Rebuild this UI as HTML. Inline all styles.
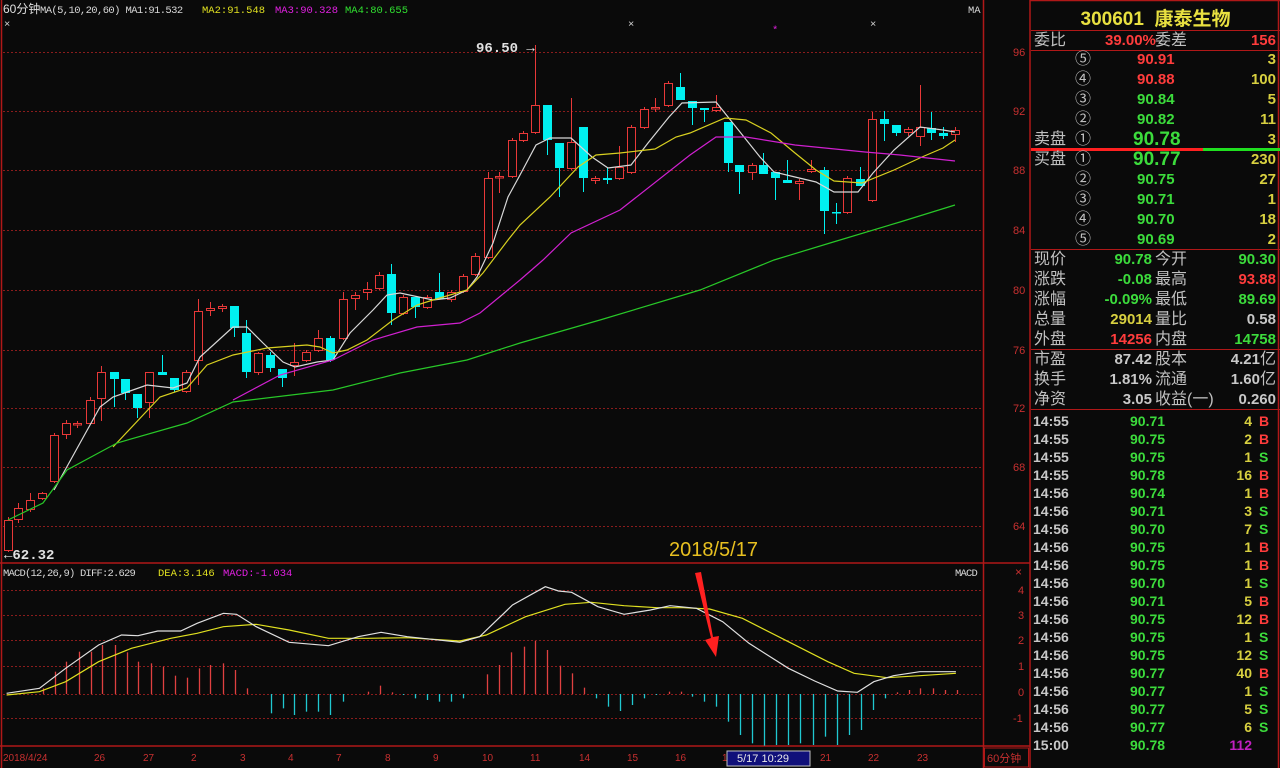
<!DOCTYPE html>
<html><head><meta charset="utf-8">
<style>
body{margin:0;background:#0a0a0a;width:1280px;height:768px;overflow:hidden;font-family:"Liberation Sans","Noto Sans CJK SC",sans-serif;}
#c{position:absolute;left:0;top:0}
.rp{position:absolute;left:1031px;top:0;width:249px;height:768px;color:#c0c0c0;font-weight:bold;}
.row{position:absolute;left:0;width:249px;height:20px;font-size:15px;line-height:20px;}
.row span{position:absolute;white-space:nowrap}
.g{color:#3cdc3c}.r{color:#ff3c3c}.y{color:#d8d040}.w{color:#c8c8c8}.m{color:#d020d0}
.cn{font-weight:normal;font-size:16px;color:#c0c0c0}
.hl{position:absolute;left:0;width:249px;height:1px;background:#b01818}
</style></head><body>
<svg id="c" width="1280" height="768" xmlns="http://www.w3.org/2000/svg">
<rect x="0" y="0" width="1280" height="768" fill="#0a0a0a"/>
<g id="grid" stroke="#8a1c1c" stroke-dasharray="2,2" stroke-width="1"></g>
<g fill="none" stroke="#b01818" stroke-width="1.5">
<line x1="1.5" y1="0" x2="1.5" y2="768"/>
<line x1="0" y1="563" x2="1030" y2="563"/>
<line x1="0" y1="746" x2="1030" y2="746"/>
<line x1="983.5" y1="0" x2="983.5" y2="768"/>
<line x1="1030" y1="0" x2="1030" y2="768"/>
<line x1="1030" y1="0.5" x2="1280" y2="0.5"/>
<line x1="1278.5" y1="0" x2="1278.5" y2="768"/>
</g>
<g id="cand"></g>
<g id="ma" fill="none" stroke-width="1.2"></g>
<g id="bars" stroke-width="1.3"></g>
<g id="macd" fill="none" stroke-width="1.2"></g>
<g font-family="Liberation Sans,sans-serif" font-size="11" fill="#c83030">
<text x="1013" y="56">96</text><text x="1013" y="115">92</text><text x="1013" y="174">88</text><text x="1013" y="234">84</text><text x="1013" y="294">80</text><text x="1013" y="354">76</text><text x="1013" y="412">72</text><text x="1013" y="471">68</text><text x="1013" y="530">64</text>
<text x="1018" y="594">4</text><text x="1018" y="619">3</text><text x="1018" y="644">2</text><text x="1018" y="670">1</text><text x="1018" y="696">0</text><text x="1013" y="722">-1</text>
</g>
<text x="1015" y="576" font-size="12" fill="#c83030" font-family="Liberation Sans,sans-serif">×</text>
<g font-family="Liberation Mono,monospace" font-size="10.5">
<text x="3" y="13" fill="#e0e0e0" font-family="Liberation Sans,Noto Sans CJK SC,sans-serif" font-size="12">60分钟</text>
<text x="40" y="13" fill="#d8d8d8" letter-spacing="-0.6">MA(5,10,20,60) MA1:91.532</text>
<text x="202" y="13" fill="#e0e020">MA2:91.548</text>
<text x="275" y="13" fill="#e020e0">MA3:90.328</text>
<text x="345" y="13" fill="#30e030">MA4:80.655</text>
<text x="968" y="13" fill="#d8d8d8">MA</text>
<text x="4" y="27" fill="#d8d8d8">×</text>
<text x="628" y="27" fill="#d8d8d8">×</text>
<text x="870" y="27" fill="#d8d8d8">×</text>
<text x="772" y="33" fill="#e020e0">*</text>
<text x="3" y="576" fill="#d8d8d8" letter-spacing="-0.8">MACD(12,26,9) DIFF:2.629</text>
<text x="158" y="576" fill="#e0e020">DEA:3.146</text>
<text x="223" y="576" fill="#e020e0">MACD:-1.034</text>
<text x="955" y="576" fill="#d8d8d8" letter-spacing="-0.8">MACD</text>
</g>
<text x="476" y="52" font-family="Liberation Mono,monospace" font-weight="bold" font-size="14" fill="#e0e0e0">96.50 →</text>
<text x="4" y="559" font-family="Liberation Mono,monospace" font-weight="bold" font-size="14" fill="#e0e0e0">←62.32</text>
<text x="669" y="556" font-family="Liberation Sans,sans-serif" font-size="20" fill="#e8c020">2018/5/17</text>
<polygon points="695,573 701,572 713,637 719,636 716,657 705,640 711,638" fill="#ff2020"/>
<g font-family="Liberation Sans,sans-serif" font-size="10" fill="#c83030">
<text x="3" y="761">2018/4/24</text><text x="94" y="761">26</text><text x="143" y="761">27</text><text x="191" y="761">2</text><text x="240" y="761">3</text><text x="288" y="761">4</text><text x="336" y="761">7</text><text x="385" y="761">8</text><text x="433" y="761">9</text><text x="482" y="761">10</text><text x="530" y="761">11</text><text x="579" y="761">14</text><text x="627" y="761">15</text><text x="675" y="761">16</text><text x="722" y="761">1</text><text x="820" y="761">21</text><text x="868" y="761">22</text><text x="917" y="761">23</text>
</g>
<rect x="727" y="751" width="83" height="15" fill="#10107a" stroke="#c0c0c0" stroke-width="1"/>
<text x="737" y="762" font-family="Liberation Sans,sans-serif" font-size="11" fill="#e8e8e8">5/17 10:29</text>
<rect x="984.5" y="748" width="44" height="19" fill="none" stroke="#b01818"/>
<text x="987" y="762" font-family="Liberation Sans,Noto Sans CJK SC,sans-serif" font-size="11" fill="#c83030">60分钟</text>
</svg>

<div class="rp">
<div style="position:absolute;left:0;top:4px;width:249px;text-align:center;font-size:19px;color:#e8e040;font-family:'Liberation Sans','Noto Sans CJK SC',sans-serif;">300601&nbsp; 康泰生物</div>
<div class="hl" style="top:30px"></div>
<div class="row" style="top:31px"><span class="cn" style="left:3px">委比</span><span class="r" style="left:74px">39.00%</span><span class="cn" style="left:124px">委差</span><span class="r" style="right:4px">156</span></div>
<div class="hl" style="top:50px"></div>
<div class="row" style="top:50px"><span class="cn" style="left:44px">⑤</span><span class="r" style="left:106px">90.91</span><span class="y" style="right:4px">3</span></div>
<div class="row" style="top:70px"><span class="cn" style="left:44px">④</span><span class="r" style="left:106px">90.88</span><span class="y" style="right:4px">100</span></div>
<div class="row" style="top:90px"><span class="cn" style="left:44px">③</span><span class="g" style="left:106px">90.84</span><span class="y" style="right:4px">5</span></div>
<div class="row" style="top:110px"><span class="cn" style="left:44px">②</span><span class="g" style="left:106px">90.82</span><span class="y" style="right:4px">11</span></div>
<div class="row" style="top:130px"><span class="cn" style="left:3px">卖盘</span><span class="cn" style="left:44px">①</span><span class="g" style="left:102px;font-size:19px">90.78</span><span class="y" style="right:4px">3</span></div>
<div style="position:absolute;top:148px;left:0;width:172px;height:3px;background:#ff2020"></div>
<div style="position:absolute;top:148px;left:172px;width:77px;height:3px;background:#20e020"></div>
<div class="row" style="top:150px"><span class="cn" style="left:3px">买盘</span><span class="cn" style="left:44px">①</span><span class="g" style="left:102px;font-size:19px">90.77</span><span class="y" style="right:4px">230</span></div>
<div class="row" style="top:170px"><span class="cn" style="left:44px">②</span><span class="g" style="left:106px">90.75</span><span class="y" style="right:4px">27</span></div>
<div class="row" style="top:190px"><span class="cn" style="left:44px">③</span><span class="g" style="left:106px">90.71</span><span class="y" style="right:4px">1</span></div>
<div class="row" style="top:210px"><span class="cn" style="left:44px">④</span><span class="g" style="left:106px">90.70</span><span class="y" style="right:4px">18</span></div>
<div class="row" style="top:230px"><span class="cn" style="left:44px">⑤</span><span class="g" style="left:106px">90.69</span><span class="y" style="right:4px">2</span></div>
<div class="hl" style="top:249px"></div>
<div class="row" style="top:250px"><span class="cn" style="left:3px">现价</span><span class="g" style="right:128px">90.78</span><span class="cn" style="left:124px">今开</span><span class="g" style="right:4px">90.30</span></div>
<div class="row" style="top:270px"><span class="cn" style="left:3px">涨跌</span><span class="g" style="right:128px">-0.08</span><span class="cn" style="left:124px">最高</span><span class="r" style="right:4px">93.88</span></div>
<div class="row" style="top:290px"><span class="cn" style="left:3px">涨幅</span><span class="g" style="right:128px">-0.09%</span><span class="cn" style="left:124px">最低</span><span class="g" style="right:4px">89.69</span></div>
<div class="row" style="top:310px"><span class="cn" style="left:3px">总量</span><span class="y" style="right:128px">29014</span><span class="cn" style="left:124px">量比</span><span class="w" style="right:4px">0.58</span></div>
<div class="row" style="top:330px"><span class="cn" style="left:3px">外盘</span><span class="r" style="right:128px">14256</span><span class="cn" style="left:124px">内盘</span><span class="g" style="right:4px">14758</span></div>
<div class="hl" style="top:349px"></div>
<div class="row" style="top:350px"><span class="cn" style="left:3px">市盈</span><span class="w" style="right:128px">87.42</span><span class="cn" style="left:124px">股本</span><span class="w" style="right:4px">4.21<span class="cn" style="position:static">亿</span></span></div>
<div class="row" style="top:370px"><span class="cn" style="left:3px">换手</span><span class="w" style="right:128px">1.81%</span><span class="cn" style="left:124px">流通</span><span class="w" style="right:4px">1.60<span class="cn" style="position:static">亿</span></span></div>
<div class="row" style="top:390px"><span class="cn" style="left:3px">净资</span><span class="w" style="right:128px">3.05</span><span class="cn" style="left:124px">收益(一)</span><span class="w" style="right:4px">0.260</span></div>
<div class="hl" style="top:409px"></div>
<div id="trades"></div>
</div>

<script>
var grid=document.getElementById('grid'),NS='http://www.w3.org/2000/svg';
function el(p,t,a){var e=document.createElementNS(NS,t);for(var k in a)e.setAttribute(k,a[k]);p.appendChild(e);return e;}
[52,111,170,230,290,350,408,467,526,590,615,640,666,694,718].forEach(function(y){el(grid,'line',{x1:3,y1:y+.5,x2:983,y2:y+.5});});
var C=[[8,520,550,517,552,'r'],[18,508,519,503,523,'r'],[30,500,509,493,512,'r'],[42,493,498,492,500,'r'],[54,435,481,433,483,'r'],[66,423,434,420,439,'r'],[77,423,424,421,428,'r'],[90,400,423,397,423,'r'],[101,372,398,366,421,'r'],[114,372,379,372,407,'c'],[125,379,393,379,400,'c'],[137,394,408,394,418,'c'],[149,372,402,372,418,'r'],[162,372,375,355,375,'c'],[174,378,390,378,392,'c'],[186,372,391,370,393,'r'],[198,311,360,299,385,'r'],[210,308,310,302,316,'r'],[222,306,308,304,312,'r'],[234,306,328,306,337,'c'],[246,333,372,320,378,'c'],[258,353,372,352,375,'r'],[270,355,368,352,372,'c'],[282,369,378,369,387,'c'],[294,362,365,343,376,'r'],[306,352,360,350,362,'r'],[318,338,350,330,352,'r'],[330,338,360,336,362,'c'],[343,299,338,292,340,'r'],[355,295,298,292,310,'r'],[367,289,292,282,300,'r'],[379,275,288,272,290,'r'],[391,274,313,264,325,'c'],[403,297,313,295,315,'r'],[415,297,307,297,318,'c'],[427,297,307,295,309,'r'],[439,292,299,273,299,'c'],[451,292,299,290,302,'r'],[463,276,291,274,293,'r'],[475,256,274,253,276,'r'],
[488,178,257,172,259,'r'],[499,176,177,172,193,'r'],[512,140,176,138,178,'r'],[523,133,140,131,142,'r'],[535,105,132,45,134,'r'],[547,105,140,105,155,'c'],[559,143,168,143,197,'c'],[571,142,168,98,170,'r'],[583,127,178,127,192,'c'],[595,178,180,176,184,'r'],[607,178,180,168,184,'c'],[619,167,178,146,180,'r'],[631,127,172,125,174,'r'],[644,109,127,107,129,'r'],[655,107,108,98,112,'r'],[668,83,105,81,107,'r'],[680,87,100,73,100,'c'],[692,101,108,101,125,'c'],[704,108,110,108,122,'c'],[716,107,110,95,112,'r'],[728,122,163,122,172,'c'],[739,165,172,165,194,'c'],[752,165,172,163,180,'r'],[763,165,174,153,174,'c'],[775,172,178,172,200,'c'],[787,180,183,160,183,'c'],[799,181,183,179,200,'r'],[811,169,171,160,173,'r'],[824,170,211,167,234,'c'],[836,212,213,203,224,'c'],[847,178,212,176,214,'r'],[860,179,186,167,186,'c'],[872,119,200,112,202,'r'],[884,119,124,111,141,'c'],[896,125,133,125,136,'c'],[908,129,132,127,136,'r'],[920,127,136,85,146,'r'],[931,128,133,112,140,'c'],[943,133,136,127,139,'c'],[955,130,134,127,142,'r']];
var cg=document.getElementById('cand');
C.forEach(function(c){var x=c[0],col=c[5]=='c'?'#00f0f0':'#e83838';
el(cg,'line',{x1:x+.5,y1:c[3],x2:x+.5,y2:c[4],stroke:col,'stroke-width':1});
var h=Math.max(c[2]-c[1],1.5);
if(c[5]=='c')el(cg,'rect',{x:x-4,y:c[1],width:9,height:h,fill:col});
else el(cg,'rect',{x:x-3.5,y:c[1]+.5,width:8,height:h,fill:'#0a0a0a',stroke:col,'stroke-width':1});});
function pl(g,col,pts){el(g,'polyline',{points:pts,stroke:col});}
var ma=document.getElementById('ma');
pl(ma,'#d8d8d8','54,490 100,407 113,397 147,385 173,388 187,383 200,357 233,327 247,327 263,343 283,362 295,367 317,362 333,360 350,333 373,310 387,295 400,293 433,300 450,298 467,290 477,277 493,243 508,197 520,175 536,145 550,138 571,138 592,157 608,168 631,165 648,143 669,117 682,103 716,102 736,127 760,157 774,172 795,177 816,182 834,192 858,192 873,173 894,150 920,127 943,130 955,132');
pl(ma,'#d8d020','113,447 160,397 187,388 207,365 233,355 267,348 293,346 307,345 320,347 333,353 347,350 367,340 393,320 417,305 433,300 467,290 483,273 508,240 520,225 550,197 578,167 596,155 620,153 655,149 676,137 690,133 725,118 746,120 771,133 795,153 816,170 834,181 862,183 894,170 922,157 943,148 955,140');
pl(ma,'#d020d0','233,400 280,375 333,360 373,340 417,327 460,323 480,313 520,280 543,260 571,233 620,210 690,155 716,137 746,137 795,145 865,152 900,155 955,161');
pl(ma,'#28c828','8,520 43,503 67,470 117,443 187,423 233,402 333,390 400,373 467,360 520,343 600,320 700,290 774,260 830,243 900,222 955,205');
var B=[[65,400],[83,350],[100,320],[120,290],[138,290],[155,270],[175,270],[193,292],[210,320],[230,325],[248,335],[267,362],[285,368],[303,340],[320,330],[340,325],[358,345],[376,400],[412,475],[430,460],[448,480],[466,470],[484,470],[503,480],[522,440],[560,410],[578,392],[596,412],[614,420],[632,430],[650,435],[668,440],[687,440],[705,430],[741,358],[760,330],[778,292],[797,275],[815,258],[833,285],[852,332],[870,355],[889,398],[907,430],[925,455],[943,468],[962,450],[980,430],[999,420],[1018,410],[1036,410],[1054,425],[1072,440],[1090,455],[1108,500],[1126,540],[1145,565],[1163,572],[1181,570],[1200,570],[1218,565],[1237,570],[1256,545],[1274,570],[1292,540],[1310,525],[1329,465],[1347,430],[1365,412],[1383,405],[1401,400],[1420,400],[1438,405],[1456,405]];
var bg=document.getElementById('bars');
B.forEach(function(b){var x=Math.round(b[0]*0.657)+.5,y=b[1]/3+555;el(bg,'line',{x1:x,y1:694,x2:x,y2:y,stroke:y<694?'#e04040':'#20c8d0'});});
function cv(s){return s.trim().split(/\s+/).map(function(p){var a=p.split(',');return (a[0]*0.657).toFixed(1)+','+(a[1]/3+555).toFixed(1);}).join(' ');}
var mg=document.getElementById('macd');
pl(mg,'#e0e020',cv('10,420 60,410 100,380 150,320 200,280 260,250 300,235 340,215 390,208 440,225 500,250 560,250 620,248 700,258 740,240 800,185 860,148 900,142 950,152 1000,158 1040,158 1080,162 1130,190 1200,260 1260,320 1300,355 1350,368 1400,362 1455,355'));
pl(mg,'#e0e0e0',cv('10,415 60,400 100,340 150,270 185,240 210,242 240,228 275,228 300,205 340,175 360,178 390,215 440,262 500,272 545,245 580,232 620,245 700,262 730,245 780,150 830,95 850,108 870,112 910,155 950,178 990,165 1020,152 1060,160 1100,200 1140,265 1200,340 1240,378 1275,408 1305,412 1330,380 1360,362 1400,350 1455,350'));
</script>
<div style="position:absolute;left:1031px;top:0;width:249px;height:768px;pointer-events:none">
<div style="position:absolute;top:412px;left:0;width:249px;font-weight:bold;font-size:14px;line-height:18px;font-family:'Liberation Sans',sans-serif;">
<div style="position:relative;height:18px"><span style="position:absolute;left:2px;color:#c8c8c8">14:55</span><span style="position:absolute;left:99px;color:#3cdc3c">90.71</span><span style="position:absolute;right:28px;color:#d8d040">4</span><span style="position:absolute;left:228px;color:#ff3c3c">B</span></div>
<div style="position:relative;height:18px"><span style="position:absolute;left:2px;color:#c8c8c8">14:55</span><span style="position:absolute;left:99px;color:#3cdc3c">90.75</span><span style="position:absolute;right:28px;color:#d8d040">2</span><span style="position:absolute;left:228px;color:#ff3c3c">B</span></div>
<div style="position:relative;height:18px"><span style="position:absolute;left:2px;color:#c8c8c8">14:55</span><span style="position:absolute;left:99px;color:#3cdc3c">90.75</span><span style="position:absolute;right:28px;color:#d8d040">1</span><span style="position:absolute;left:228px;color:#3cdc3c">S</span></div>
<div style="position:relative;height:18px"><span style="position:absolute;left:2px;color:#c8c8c8">14:55</span><span style="position:absolute;left:99px;color:#3cdc3c">90.78</span><span style="position:absolute;right:28px;color:#d8d040">16</span><span style="position:absolute;left:228px;color:#ff3c3c">B</span></div>
<div style="position:relative;height:18px"><span style="position:absolute;left:2px;color:#c8c8c8">14:56</span><span style="position:absolute;left:99px;color:#3cdc3c">90.74</span><span style="position:absolute;right:28px;color:#d8d040">1</span><span style="position:absolute;left:228px;color:#ff3c3c">B</span></div>
<div style="position:relative;height:18px"><span style="position:absolute;left:2px;color:#c8c8c8">14:56</span><span style="position:absolute;left:99px;color:#3cdc3c">90.71</span><span style="position:absolute;right:28px;color:#d8d040">3</span><span style="position:absolute;left:228px;color:#3cdc3c">S</span></div>
<div style="position:relative;height:18px"><span style="position:absolute;left:2px;color:#c8c8c8">14:56</span><span style="position:absolute;left:99px;color:#3cdc3c">90.70</span><span style="position:absolute;right:28px;color:#d8d040">7</span><span style="position:absolute;left:228px;color:#3cdc3c">S</span></div>
<div style="position:relative;height:18px"><span style="position:absolute;left:2px;color:#c8c8c8">14:56</span><span style="position:absolute;left:99px;color:#3cdc3c">90.75</span><span style="position:absolute;right:28px;color:#d8d040">1</span><span style="position:absolute;left:228px;color:#ff3c3c">B</span></div>
<div style="position:relative;height:18px"><span style="position:absolute;left:2px;color:#c8c8c8">14:56</span><span style="position:absolute;left:99px;color:#3cdc3c">90.75</span><span style="position:absolute;right:28px;color:#d8d040">1</span><span style="position:absolute;left:228px;color:#ff3c3c">B</span></div>
<div style="position:relative;height:18px"><span style="position:absolute;left:2px;color:#c8c8c8">14:56</span><span style="position:absolute;left:99px;color:#3cdc3c">90.70</span><span style="position:absolute;right:28px;color:#d8d040">1</span><span style="position:absolute;left:228px;color:#3cdc3c">S</span></div>
<div style="position:relative;height:18px"><span style="position:absolute;left:2px;color:#c8c8c8">14:56</span><span style="position:absolute;left:99px;color:#3cdc3c">90.71</span><span style="position:absolute;right:28px;color:#d8d040">5</span><span style="position:absolute;left:228px;color:#ff3c3c">B</span></div>
<div style="position:relative;height:18px"><span style="position:absolute;left:2px;color:#c8c8c8">14:56</span><span style="position:absolute;left:99px;color:#3cdc3c">90.75</span><span style="position:absolute;right:28px;color:#d8d040">12</span><span style="position:absolute;left:228px;color:#ff3c3c">B</span></div>
<div style="position:relative;height:18px"><span style="position:absolute;left:2px;color:#c8c8c8">14:56</span><span style="position:absolute;left:99px;color:#3cdc3c">90.75</span><span style="position:absolute;right:28px;color:#d8d040">1</span><span style="position:absolute;left:228px;color:#3cdc3c">S</span></div>
<div style="position:relative;height:18px"><span style="position:absolute;left:2px;color:#c8c8c8">14:56</span><span style="position:absolute;left:99px;color:#3cdc3c">90.75</span><span style="position:absolute;right:28px;color:#d8d040">12</span><span style="position:absolute;left:228px;color:#3cdc3c">S</span></div>
<div style="position:relative;height:18px"><span style="position:absolute;left:2px;color:#c8c8c8">14:56</span><span style="position:absolute;left:99px;color:#3cdc3c">90.77</span><span style="position:absolute;right:28px;color:#d8d040">40</span><span style="position:absolute;left:228px;color:#ff3c3c">B</span></div>
<div style="position:relative;height:18px"><span style="position:absolute;left:2px;color:#c8c8c8">14:56</span><span style="position:absolute;left:99px;color:#3cdc3c">90.77</span><span style="position:absolute;right:28px;color:#d8d040">1</span><span style="position:absolute;left:228px;color:#3cdc3c">S</span></div>
<div style="position:relative;height:18px"><span style="position:absolute;left:2px;color:#c8c8c8">14:56</span><span style="position:absolute;left:99px;color:#3cdc3c">90.77</span><span style="position:absolute;right:28px;color:#d8d040">5</span><span style="position:absolute;left:228px;color:#3cdc3c">S</span></div>
<div style="position:relative;height:18px"><span style="position:absolute;left:2px;color:#c8c8c8">14:56</span><span style="position:absolute;left:99px;color:#3cdc3c">90.77</span><span style="position:absolute;right:28px;color:#d8d040">6</span><span style="position:absolute;left:228px;color:#3cdc3c">S</span></div>
<div style="position:relative;height:18px"><span style="position:absolute;left:2px;color:#c8c8c8">15:00</span><span style="position:absolute;left:99px;color:#3cdc3c">90.78</span><span style="position:absolute;right:28px;color:#c020c0">112</span></div>
</div></div>
</body></html>
